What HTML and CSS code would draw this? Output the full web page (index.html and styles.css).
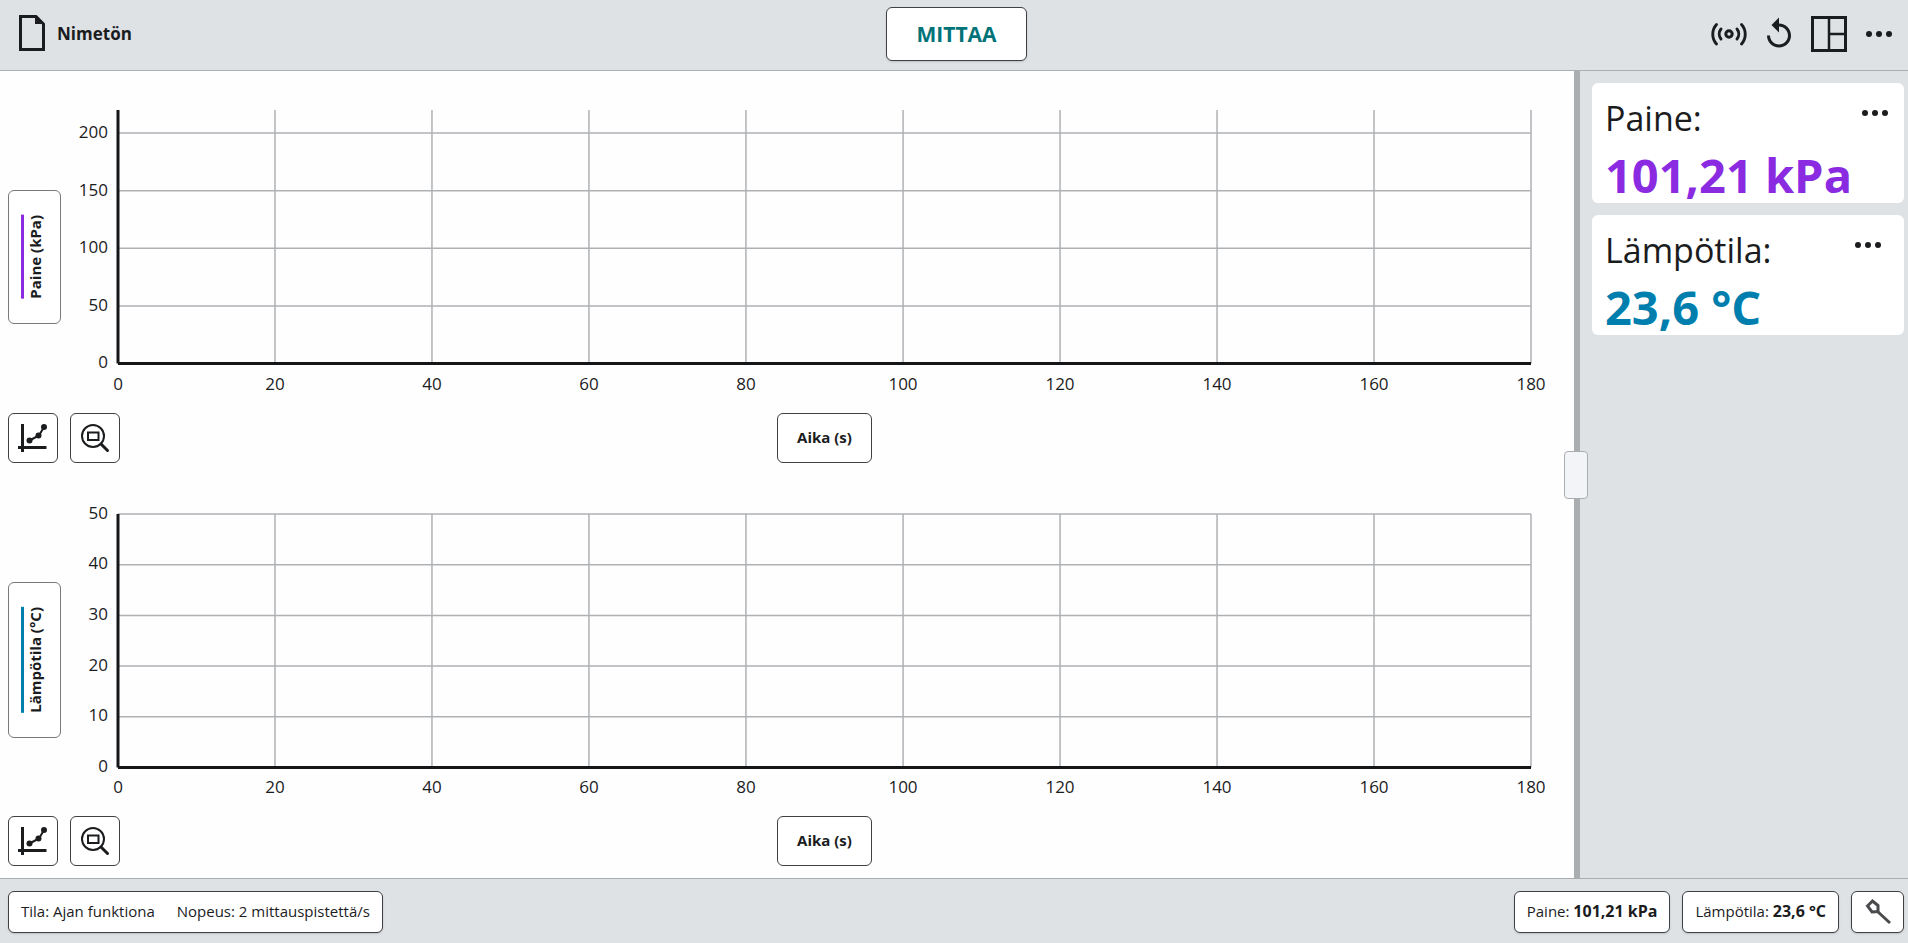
FILE: index.html
```html
<!DOCTYPE html>
<html lang="fi">
<head>
<meta charset="utf-8">
<title>Nimetön</title>
<link rel="stylesheet" href="styles.css">
</head>
<body>
<svg class="defs" aria-hidden="true">
  <symbol id="dots" viewBox="0 0 26 6"><circle cx="3" cy="3" r="3"/><circle cx="13" cy="3" r="3"/><circle cx="23" cy="3" r="3"/></symbol>
  <symbol id="graph-tools" viewBox="0 0 30 30">
    <path d="M4.500 1v28M0 24.500h28.500" fill="none" stroke="currentColor" stroke-width="3"/>
    <path d="M11.500 17.500l9.500-5 5-8.500" fill="none" stroke="currentColor" stroke-width="2"/>
    <circle cx="11.500" cy="17.500" r="3"/><circle cx="20.500" cy="12.500" r="3"/><circle cx="26" cy="4" r="3"/>
  </symbol>
  <symbol id="zoom-fit" viewBox="0 0 30 30" fill="none" stroke="currentColor">
    <circle cx="13" cy="13" r="11" stroke-width="2"/>
    <path d="M8 9.500h10.500v7.500H8z" stroke-width="2"/>
    <path d="M21 21l6.500 6.500" stroke-width="3" stroke-linecap="round"/>
  </symbol>
</svg>

<header class="topbar">
  <button class="file-button" type="button">
    <svg class="file-icon" viewBox="0 0 26 36"><path d="M1.500 1.500h15.500l7.500 7.500v25.500h-23z" fill="none" stroke="currentColor" stroke-width="3"/><path d="M16 1v8h9z"/></svg>
    <span>Nimetön</span>
  </button>
  <button class="collect" type="button">MITTAA</button>
  <div class="topbar-tools">
    <button class="icon-button" type="button" aria-label="Anturit">
      <svg class="icon" viewBox="0 0 36 36" fill="none" stroke="currentColor" stroke-linecap="round"><circle cx="18" cy="18" r="3.200" stroke-width="3"/><path d="M10 13a8 8 0 0 0 0 10M26 13a8 8 0 0 1 0 10" stroke-width="2.900"/><path d="M5.500 8.500c-5 5.500-5 14 0 19.500M30.500 8.500c5 5.500 5 14 0 19.500" stroke-width="2.900"/></svg>
    </button>
    <button class="icon-button" type="button" aria-label="Kumoa">
      <svg class="icon" viewBox="0 0 24 24"><path d="M12 5V1L7 6l5 5V7c3.310 0 6 2.690 6 6s-2.690 6-6 6-6-2.690-6-6H4c0 4.420 3.580 8 8 8s8-3.580 8-8-3.580-8-8-8z"/></svg>
    </button>
    <button class="icon-button" type="button" aria-label="Näkymä">
      <svg class="icon" viewBox="0 0 36 36" fill="none" stroke="currentColor"><path d="M1.500 1.500h33v33h-33z" stroke-width="3"/><path d="M18 2v32M18 18h16" stroke-width="2.500"/></svg>
    </button>
    <button class="icon-button" type="button" aria-label="Lisää"><svg class="dots"><use href="#dots"/></svg></button>
  </div>
</header>

<main class="workspace">
  <div class="charts">
    <section class="chart">
      <div class="y-title"><button class="axis-button" type="button"><span class="series pressure">Paine (kPa)</span></button></div>
      <div class="y-labels">
        <i class="headroom"></i><span>200</span><span>150</span><span>100</span><span>50</span><span class="last">0</span>
      </div>
      <div class="plot-area">
        <svg class="plot">
          <g class="grid">
            <line x1="11.110%" x2="11.110%" y2="100%"/><line x1="22.220%" x2="22.220%" y2="100%"/><line x1="33.330%" x2="33.330%" y2="100%"/><line x1="44.440%" x2="44.440%" y2="100%"/><line x1="55.560%" x2="55.560%" y2="100%"/><line x1="66.670%" x2="66.670%" y2="100%"/><line x1="77.780%" x2="77.780%" y2="100%"/><line x1="88.890%" x2="88.890%" y2="100%"/><line x1="100%" x2="100%" y2="100%"/>
            <line x2="100%" y1="9.090%" y2="9.090%"/><line x2="100%" y1="31.820%" y2="31.820%"/><line x2="100%" y1="54.550%" y2="54.550%"/><line x2="100%" y1="77.270%" y2="77.270%"/>
          </g>
          <g class="axes"><line y2="100%"/><line x2="100%" y1="100%" y2="100%"/></g>
        </svg>
        <div class="x-labels"><span>0</span><span>20</span><span>40</span><span>60</span><span>80</span><span>100</span><span>120</span><span>140</span><span>160</span><span>180</span></div>
      </div>
      <div class="chart-tools">
        <button class="tool" type="button" aria-label="Kuvaajan työkalut"><svg><use href="#graph-tools"/></svg></button>
        <button class="tool" type="button" aria-label="Sovita"><svg><use href="#zoom-fit"/></svg></button>
      </div>
      <button class="x-title" type="button">Aika (s)</button>
    </section>
    <section class="chart">
      <div class="y-title"><button class="axis-button" type="button"><span class="series temperature">Lämpötila (°C)</span></button></div>
      <div class="y-labels">
        <span>50</span><span>40</span><span>30</span><span>20</span><span>10</span><span class="last">0</span>
      </div>
      <div class="plot-area">
        <svg class="plot">
          <g class="grid">
            <line x1="11.110%" x2="11.110%" y2="100%"/><line x1="22.220%" x2="22.220%" y2="100%"/><line x1="33.330%" x2="33.330%" y2="100%"/><line x1="44.440%" x2="44.440%" y2="100%"/><line x1="55.560%" x2="55.560%" y2="100%"/><line x1="66.670%" x2="66.670%" y2="100%"/><line x1="77.780%" x2="77.780%" y2="100%"/><line x1="88.890%" x2="88.890%" y2="100%"/><line x1="100%" x2="100%" y2="100%"/>
            <line x2="100%"/><line x2="100%" y1="20%" y2="20%"/><line x2="100%" y1="40%" y2="40%"/><line x2="100%" y1="60%" y2="60%"/><line x2="100%" y1="80%" y2="80%"/>
          </g>
          <g class="axes"><line y2="100%"/><line x2="100%" y1="100%" y2="100%"/></g>
        </svg>
        <div class="x-labels"><span>0</span><span>20</span><span>40</span><span>60</span><span>80</span><span>100</span><span>120</span><span>140</span><span>160</span><span>180</span></div>
      </div>
      <div class="chart-tools">
        <button class="tool" type="button" aria-label="Kuvaajan työkalut"><svg><use href="#graph-tools"/></svg></button>
        <button class="tool" type="button" aria-label="Sovita"><svg><use href="#zoom-fit"/></svg></button>
      </div>
      <button class="x-title" type="button">Aika (s)</button>
    </section>
  </div>
  <div class="divider"><button class="handle" type="button" aria-label="Muuta kokoa"></button></div>
  <aside class="meters">
    <section class="card">
      <div class="card-head"><h2>Paine:</h2><button class="card-menu" type="button" aria-label="Paine, valikko"><svg class="dots"><use href="#dots"/></svg></button></div>
      <p class="value value-pressure">101,21 kPa</p>
    </section>
    <section class="card card-inset">
      <div class="card-head"><h2>Lämpötila:</h2><button class="card-menu" type="button" aria-label="Lämpötila, valikko"><svg class="dots"><use href="#dots"/></svg></button></div>
      <p class="value value-temperature">23,6 °C</p>
    </section>
  </aside>
</main>

<footer class="statusbar">
  <button class="status mode" type="button"><span>Tila: Ajan funktiona</span><span>Nopeus: 2 mittauspistettä/s</span></button>
  <div class="status-group">
    <button class="status" type="button">Paine: <b>101,21 kPa</b></button>
    <button class="status" type="button">Lämpötila: <b>23,6 °C</b></button>
    <button class="status probe" type="button" aria-label="Anturi">
      <svg viewBox="0 0 26 26" fill="none" stroke="currentColor" stroke-width="3"><path d="M2.500 7l5-5 5.500 4.500v6l-6 .5z"/><path d="M12 12l13 12"/></svg>
    </button>
  </div>
</footer>
</body>
</html>
```
FILE: styles.css
```css
* { box-sizing: border-box; }
body {
  margin: 0;
  height: 100vh;
  display: flex;
  flex-direction: column;
  background: #fefefe;
  color: #1b1c1e;
  font-family: "Segoe UI", "Open Sans", "Noto Sans", sans-serif;
  font-size: 15px;
}
button {
  font: inherit;
  color: inherit;
  padding: 0;
  border: 0;
  background: none;
}
svg { display: block; }
svg:not([fill]) { fill: currentColor; }
.defs { position: absolute; width: 0; height: 0; }
.dots { width: 26px; height: 6px; }

.topbar {
  display: grid;
  grid-template-columns: 1fr auto 1fr;
  align-items: center;
  height: 71px;
  padding: 0 11px 2px 16px;
  background: #dfe2e5;
  border-bottom: 1px solid #aaaeb1;
}
.file-button {
  display: flex;
  align-items: center;
  gap: 12px;
  justify-self: start;
  padding: 0 0 2px 3px;
  font-size: 17px;
  font-weight: 700;
}
.file-icon { width: 26px; height: 36px; }
.collect {
  height: 54px;
  padding: 0 29px;
  border: 1px solid #3e4043;
  border-radius: 6px;
  background: #fff;
  box-shadow: 0 1px 2px rgba(0, 0, 0, .15);
  color: #007378;
  font-size: 21px;
  font-weight: 700;
}
.topbar-tools { display: flex; align-items: center; justify-content: flex-end; gap: 14px; }
.icon-button { min-width: 36px; display: flex; justify-content: center; }
.icon { width: 36px; height: 36px; }

.workspace { flex: 1; min-height: 0; display: flex; }
.charts { flex: 1; min-width: 0; display: flex; flex-direction: column; }
.chart {
  flex: 1;
  min-height: 0;
  display: grid;
  grid-template-columns: 53px 57px 1fr;
  grid-template-rows: 1fr 50px;
  padding: 0 43px 12px 8px;
}
.y-title { padding-top: 30px; display: flex; align-items: center; }
.axis-button {
  width: 53px;
  padding: 24px 0 24px 12px;
  display: flex;
  border: 1px solid #77797c;
  border-radius: 6px;
  background: #fff;
  font-weight: 700;
}
.series {
  writing-mode: vertical-rl;
  transform: rotate(180deg);
  line-height: 22px;
  border-right: 3px solid;
}
.series.pressure { border-color: #8a2be2; }
.series.temperature { border-color: #007fae; }
.y-labels {
  margin: 39px 0 49px;
  padding-right: 10px;
  display: flex;
  flex-direction: column;
  font-size: 17px;
  line-height: 24px;
  text-align: right;
}
.y-labels span { flex: 50 0 0; height: 0; min-height: 0; margin-top: -13px; padding-bottom: 13px; }
.y-labels .headroom { flex: 20 0 0; }
.y-labels .last { flex: none; }
.plot-area { display: flex; flex-direction: column; margin-top: 39px; }
.plot { flex: 1; min-height: 0; width: 100%; overflow: visible; }
.grid { stroke: #aeb1b4; stroke-width: 1.500px; }
.axes { stroke: #151618; stroke-width: 3px; }
.x-labels {
  display: flex;
  justify-content: space-between;
  height: 49px;
  padding-top: 8px;
  font-size: 17px;
  line-height: 24px;
}
.x-labels span { width: 0; display: flex; justify-content: center; }
.chart-tools { grid-column: 1 / 3; display: flex; gap: 12px; }
.tool, .x-title {
  border: 1px solid #3e4043;
  border-radius: 6px;
  background: #fff;
}
.tool { flex: none; width: 50px; height: 50px; display: grid; place-items: center; }
.tool svg { width: 30px; height: 30px; }
.x-title { justify-self: center; padding: 0 19px 2px; font-weight: 700; }

.divider { position: relative; width: 6px; background: #aaaeb1; }
.handle {
  position: absolute;
  left: -10px;
  top: calc(50% - 24px);
  width: 24px;
  height: 48px;
  border: 1px solid #aaaeb1;
  border-radius: 4px;
  background: #f3f4f7;
}
.meters {
  width: 328px;
  padding: 12px 4px 12px 12px;
  display: flex;
  flex-direction: column;
  gap: 12px;
  background: #dfe2e5;
}
.card { padding: 11px 16px 0 13px; border-radius: 6px; background: #fff; }
.card-inset { padding-right: 23px; }
.card-head { display: flex; justify-content: space-between; align-items: flex-start; }
.card h2 { margin: 0; font-size: 34px; font-weight: 400; line-height: 48px; }
.card-menu { padding: 16px 0; }
.value { margin: 5px 0 0; font-size: 47px; font-weight: 700; line-height: 56px; white-space: nowrap; }
.value-pressure { color: #8a2be2; }
.value-temperature { color: #007fae; }

.statusbar {
  display: flex;
  justify-content: space-between;
  padding: 12px 4px 10px 8px;
  background: #dfe2e5;
  border-top: 1px solid #aaaeb1;
}
.status-group { display: flex; gap: 12px; }
.status {
  height: 42px;
  padding: 0 12px 3px;
  border: 1px solid #3e4043;
  border-radius: 6px;
  background: #fff;
  box-shadow: 0 1px 2px rgba(0, 0, 0, .15);
}
.status b { font-size: 16px; }
.mode { display: flex; align-items: center; gap: 22px; }
.probe { width: 53px; padding-left: 13px; padding-bottom: 0; color: #4a4b4d; }
.probe svg { width: 26px; height: 26px; }
```
